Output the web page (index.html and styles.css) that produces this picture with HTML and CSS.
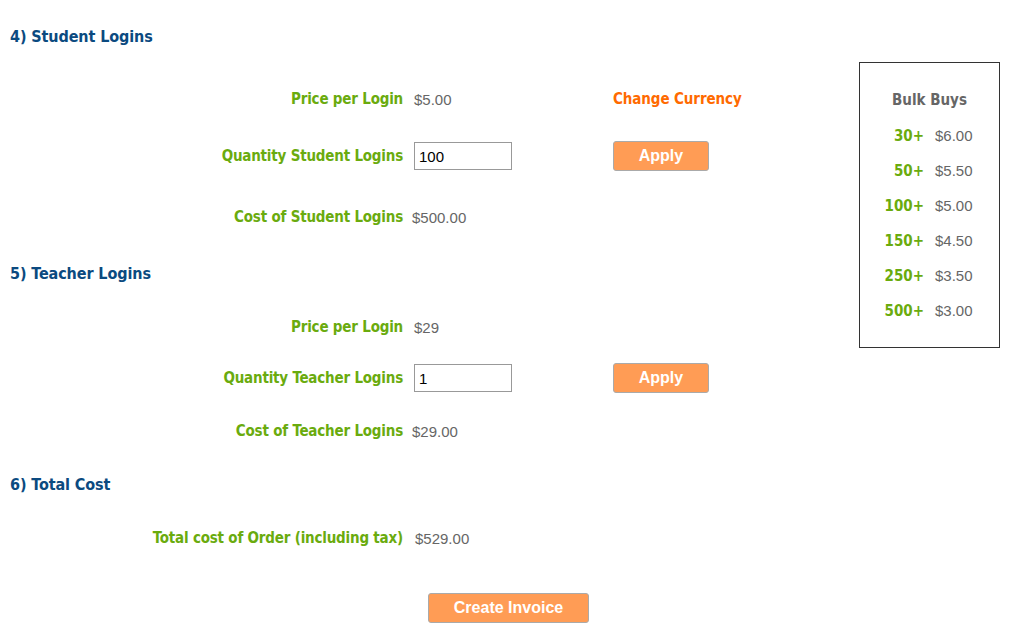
FILE: index.html
```html
<!DOCTYPE html>
<html lang="en">
<head>
    <meta charset="UTF-8">
    <title>Order Logins</title>
    <link rel="stylesheet" href="styles.css">
</head>
<body>
<div class="page">
    <div class="order">
        <div class="order-grid">
            <h2 class="step">4) Student Logins</h2>

            <div class="label">Price per Login</div>
            <div class="value">$5.00</div>
            <div class="action"><a class="currency" href="#">Change Currency</a></div>

            <div class="label">Quantity Student Logins</div>
            <div class="value"><input class="qty" type="text" value="100"></div>
            <div class="action"><button class="btn btn-apply">Apply</button></div>

            <div class="label">Cost of Student Logins</div>
            <div class="value cost">$500.00</div>
            <div class="action"></div>

            <h2 class="step">5) Teacher Logins</h2>

            <div class="label">Price per Login</div>
            <div class="value">$29</div>
            <div class="action"></div>

            <div class="label">Quantity Teacher Logins</div>
            <div class="value"><input class="qty" type="text" value="1"></div>
            <div class="action"><button class="btn btn-apply">Apply</button></div>

            <div class="label">Cost of Teacher Logins</div>
            <div class="value cost">$29.00</div>
            <div class="action"></div>

            <h2 class="step">6) Total Cost</h2>

            <div class="label">Total cost of Order (including tax)</div>
            <div class="value total">$529.00</div>
            <div class="action"></div>
        </div>

        <button class="btn btn-invoice">Create Invoice</button>
    </div>

    <div class="bulk">
        <div class="bulk-title">Bulk Buys</div>
        <div class="bulk-list">
            <span class="bulk-qty">30+</span><span class="bulk-price">$6.00</span>
            <span class="bulk-qty">50+</span><span class="bulk-price">$5.50</span>
            <span class="bulk-qty">100+</span><span class="bulk-price">$5.00</span>
            <span class="bulk-qty">150+</span><span class="bulk-price">$4.50</span>
            <span class="bulk-qty">250+</span><span class="bulk-price">$3.50</span>
            <span class="bulk-qty">500+</span><span class="bulk-price">$3.00</span>
        </div>
    </div>
</div>
</body>
</html>
```

FILE: styles.css
```css
*{
    padding: 0;
    margin: 0;
}

html, body{
    background: #fff;
}

body{
    font-family: "Liberation Sans", Arial, sans-serif;
    font-size: 15px;
    color: #666;
}

.page{
    display: flex;
    align-items: flex-start;
}

.order{
    flex: 0 0 859px;
}

/* label | value | action, row heights follow the original form */
.order-grid{
    display: grid;
    grid-template-columns: 393px 190px 1fr;
    grid-template-rows: 62px 64px 50px 72px 40px 68px 34px 72px 34px 74px;
    column-gap: 10px;
    align-items: center;
    padding: 5px 0 0 10px;
}

.step{
    grid-column: 1 / -1;
    font-family: "DejaVu Sans Condensed", "DejaVu Sans", sans-serif;
    font-size: 16px;
    font-weight: bold;
    letter-spacing: -0.1px;
    color: #0b4a80;
    margin-left: -10px;
    padding-left: 10px;
}

.label{
    text-align: right;
    font-family: "DejaVu Sans Condensed", "DejaVu Sans", sans-serif;
    font-size: 15px;
    font-weight: bold;
    letter-spacing: -0.2px;
    color: #6aab0e;
}

.value{
    color: #666;
    padding-left: 1px;
}

.cost{
    padding-left: 0;
    margin-left: -1px;
}

.total{
    padding-left: 2px;
}

.currency{
    font-family: "DejaVu Sans Condensed", "DejaVu Sans", sans-serif;
    font-size: 15px;
    font-weight: bold;
    letter-spacing: -0.1px;
    color: #ff6a00;
    text-decoration: none;
}

.qty{
    width: 98px;
    height: 28px;
    box-sizing: border-box;
    border: 1px solid #999;
    padding: 0 4px;
    font-family: "Liberation Sans", Arial, sans-serif;
    font-size: 15px;
    color: #000;
}

.btn{
    background: #ff9c55;
    border: 1px solid #aaa;
    border-radius: 3px;
    color: #fff;
    font-family: "Liberation Sans", Arial, sans-serif;
    font-size: 16px;
    font-weight: bold;
    height: 30px;
}

.btn-apply{
    width: 96px;
}

.btn-invoice{
    display: block;
    width: 161px;
    margin: 18px 0 0 428px;
}

/* 批量价格框 */
.bulk{
    width: 141px;
    height: 286px;
    box-sizing: border-box;
    border: 1px solid #333;
    margin-top: 62px;
    padding-top: 27px;
}

.bulk-title{
    text-align: center;
    font-family: "DejaVu Sans Condensed", "DejaVu Sans", sans-serif;
    font-size: 15px;
    font-weight: bold;
    color: #666;
    height: 20px;
    line-height: 20px;
}

.bulk-list{
    display: grid;
    grid-template-columns: 64px 1fr;
    grid-auto-rows: 35px;
    column-gap: 11px;
    align-items: center;
    margin-top: 8px;
}

.bulk-qty{
    text-align: right;
    font-family: "DejaVu Sans Condensed", "DejaVu Sans", sans-serif;
    font-size: 15px;
    font-weight: bold;
    color: #6aab0e;
}

.bulk-price{
    color: #666;
}
```
